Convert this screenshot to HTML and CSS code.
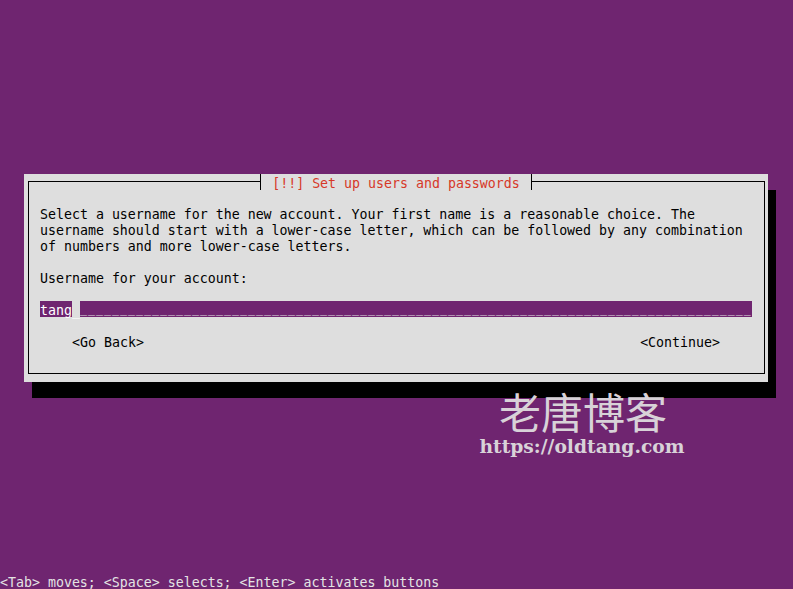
FILE: index.html
```html
<!DOCTYPE html>
<html>

<head>
    <title>Set up users and passwords</title>
    <meta charset="utf-8">
    <meta name="viewport" content="width=device-width, initial-scale=1.0">
    <link rel="stylesheet" href="styles.css">
</head>

<body>
    <div class="screen">

        <section class="dialog">
            <div class="titlebar"><span class="title">[!!] Set up users and passwords</span></div>
            <div class="frame">
                <p class="row">Select a username for the new account. Your first name is a reasonable choice. The</p>
                <p class="row">username should start with a lower-case letter, which can be followed by any combination</p>
                <p class="row">of numbers and more lower-case letters.</p>
                <p class="row"></p>
                <p class="row">Username for your account:</p>
                <p class="row"></p>
                <div class="row field"><span class="value">tang</span><span class="cursor">_</span><span class="blank">____________________________________________________________________________________</span></div>
                <p class="row"></p>
                <nav class="row buttons">
                    <span class="knap">&lt;Go Back&gt;</span>
                    <span class="knap">&lt;Continue&gt;</span>
                </nav>
                <p class="row"></p>
            </div>
        </section>

        <div class="watermark">
            <p class="wm-navn">老唐博客</p>
            <p class="wm-url">https://oldtang.com</p>
        </div>

        <p class="help">&lt;Tab&gt; moves; &lt;Space&gt; selects; &lt;Enter&gt; activates buttons</p>

    </div>
</body>

</html>
```

FILE: styles.css
```css
body {
    margin: 0;
    background-color: #6f2570;
    font-family: "DejaVu Sans Mono", "Liberation Mono", monospace;
    font-size: 13.288px;
    color: #000;
}

p {
    margin: 0;
}

.screen {
    position: relative;
    height: 589px;
    overflow: hidden;
    display: flex;
    flex-direction: column;
    padding-top: 174px;
    box-sizing: border-box;
}

/* dialog box */

.dialog {
    position: relative;
    width: 744px;
    margin-left: 24px;
    padding: 7px 3px 8px 4px;
    box-sizing: border-box;
    background-color: #dedede;
    box-shadow: 8px 16px 0 #000;
}

.titlebar {
    position: absolute;
    top: 0;
    left: 0;
    right: 0;
    display: flex;
    justify-content: center;
}

.title {
    height: 16px;
    line-height: 19px;
    padding: 0 11px;
    border-left: 1px solid #000;
    border-right: 1px solid #000;
    background-color: #dedede;
    color: #d63828;
    white-space: pre;
}

.frame {
    border: 1px solid #000;
    padding: 23px 12px 8px 11px;
}

.row {
    height: 16px;
    line-height: 20px;
    white-space: pre;
}

/* input field */

.field span {
    display: inline-block;
    height: 16px;
    vertical-align: top;
}

.value {
    background-color: #6f2570;
    color: #fff;
}

.cursor {
    color: #fff;
}

.blank {
    width: 672px;
    overflow: hidden;
    background-color: #6f2570;
    color: #dedede;
    font-size: 11.63px;
    letter-spacing: 1px;
    line-height: 16px;
}

.buttons {
    display: flex;
    justify-content: space-between;
    padding: 0 32px;
}

/* watermark */

.watermark {
    position: absolute;
    top: 389px;
    left: 470px;
    width: 224px;
    text-align: center;
    color: #d8d2d8;
}

.wm-navn {
    font-family: "Noto Sans CJK SC", sans-serif;
    font-size: 42px;
    line-height: 44px;
    padding-left: 2px;
}

.wm-url {
    font-family: "DejaVu Serif", serif;
    font-weight: bold;
    font-size: 18.7px;
    line-height: 26px;
}

/* help line */

.help {
    margin-top: auto;
    height: 16px;
    line-height: 20px;
    color: #e4e4e4;
    white-space: pre;
}
```
